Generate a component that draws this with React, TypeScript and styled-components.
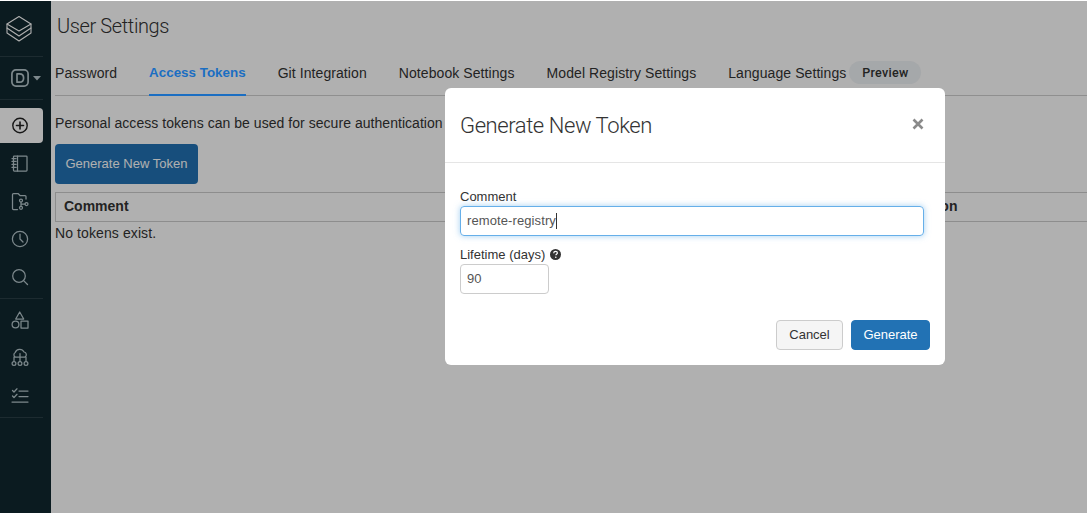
import React from "react";
import styled, { createGlobalStyle } from "styled-components";

const Global = createGlobalStyle`
  html, body { margin: 0; padding: 0; background: #fff; }
  body { font-family: "Liberation Sans", Arial, sans-serif; color: #333; font-size: 14px; }
  * { box-sizing: border-box; }
`;

const Page = styled.div`
  position: relative; width: 1087px; height: 513px; overflow: hidden;
  display: flex; padding-top: 1px; background: #fff;
`;
const Sidebar = styled.nav`
  width: 51px; flex: none; background: #11282f; display: flex; flex-direction: column;
  color: #b5c6cb; padding-right: 8px;
`;
const LogoSlot = styled.div`
  height: 55px; display: flex; align-items: center; padding: 0 0 0 6px; color: #fff;
`;
const Divider = styled.div`height: 1px; background: #2b3f46;`;
const WorkspaceSlot = styled.div`
  height: 42px; display: flex; align-items: center; gap: 4px; padding-left: 11px;
`;
const NavGroup = styled.div<{ $top: number }>`display: flex; flex-direction: column; padding: ${p => p.$top}px 0 2px;`;
const NavItem = styled.div<{ $active?: boolean }>`
  height: ${p => (p.$active ? 35 : 38)}px; margin-bottom: ${p => (p.$active ? 1 : 0)}px;
  display: flex; align-items: center; justify-content: center; padding: 0 4px 0 1px;
  border-radius: 0 4px 4px 0;
  background: ${p => (p.$active ? "#fff" : "transparent")};
  color: ${p => (p.$active ? "#222" : "inherit")};
`;
const Main = styled.main`flex: 1; min-width: 0; padding-left: 4px; display: flex; flex-direction: column;`;
const Title = styled.h1`
  margin: 0 0 0 2px; height: 51px; padding-top: 12px; font-family: Roboto, sans-serif; font-weight: 300;
  font-size: 20px; letter-spacing: -.38px; line-height: 26px; color: #333;
`;
const Tabs = styled.div`
  display: flex; gap: 32px; height: 44px; border-bottom: 1px solid #cfcfcf; white-space: nowrap; align-items: stretch;
`;
const Tab = styled.div<{ $active?: boolean }>`
  position: relative; z-index: ${p => (p.$active ? 1 : 0)};
  display: flex; align-items: center; height: 44px; padding-bottom: 1px;
  color: ${p => (p.$active ? "#1b6ec2" : "#333")};
  font-weight: ${p => (p.$active ? 700 : 400)};
  font-size: ${p => (p.$active ? 13.4 : 14)}px;
  letter-spacing: ${p => (p.$active ? 0 : .08)}px;
  border-bottom: 2px solid ${p => (p.$active ? "#1b6ec2" : "transparent")};
`;
const PreviewPill = styled.span`
  margin-left: 3px; width: 72px; height: 23px; border-radius: 12px; background: #f0f3f6;
  display: inline-flex; align-items: center; justify-content: center;
  font-family: Roboto, sans-serif; font-size: 12.5px; font-weight: 500; color: #333; letter-spacing: .3px;
`;
const Description = styled.p`margin: 19px 0 0; line-height: 16px; height: 16px; white-space: nowrap; letter-spacing: .04px;`;
const PrimaryLarge = styled.div`
  margin-top: 13px; width: 143px; height: 40px; padding-bottom: 2px; border-radius: 4px; background: #2272b4; color: #fff;
  display: flex; align-items: center; justify-content: center; font-size: 13px; letter-spacing: .02px;
`;
const TableHead = styled.div`
  margin-top: 8px; height: 30px; padding-bottom: 2px; border: 1px solid #ccc; border-right: 0; display: grid; grid-template-columns: 825px 1fr; align-items: center;
  padding-left: 8px; font-weight: 700;
`;
const EmptyText = styled.div`margin-top: 3px; line-height: 16px; letter-spacing: .1px;`;
const Backdrop = styled.div`
  position: absolute; left: 0; right: 0; top: 1px; bottom: 0; background: rgba(0,0,0,.31);
`;
const Modal = styled.div`
  position: absolute; z-index: 2; left: 445px; top: 88px; width: 500px; height: 277px; background: #fff; border-radius: 6px;
  display: flex; flex-direction: column;
`;
const ModalHeader = styled.header`
  height: 75px; border-bottom: 1px solid #e5e5e5; display: flex; align-items: center; justify-content: space-between;
  padding: 0 21px 0 15px;
`;
const ModalTitle = styled.h2`
  margin: 2px 0 0; font-family: Roboto, sans-serif; font-weight: 300; font-size: 22px; letter-spacing: -.42px; color: #333; line-height: 26px;
`;
const Close = styled.span`display: flex; color: #8a8a8a; margin-top: -2px;`;
const ModalBody = styled.div`padding: 26px 21px 0 15px; display: flex; flex-direction: column;`;
const Label = styled.label`
  font-size: 13px; line-height: 15px; color: #333; display: flex; align-items: center; gap: 5px;
`;
const Field = styled.div<{ $w?: number; $focus?: boolean }>`
  margin-top: 2px; height: 30px; width: ${p => (p.$w ? `${p.$w}px` : "100%")}; border-radius: 4px;
  border: 1px solid ${p => (p.$focus ? "#66afe9" : "#ccc")};
  box-shadow: ${p => (p.$focus ? "0 0 6px rgba(102,175,233,.6)" : "none")};
  padding: 0 0 2px 6px; font-size: 13px; letter-spacing: .1px; color: #555; display: flex; align-items: center;
`;
const Caret = styled.span`width: 1px; height: 16px; margin-top: 2px; background: #333; flex: none;`;
const FieldGroup = styled.div`margin-top: 11px;`;
const ModalFooter = styled.footer`
  margin-top: auto; display: flex; justify-content: flex-end; gap: 8px; padding: 0 15px 15px 0;
`;
const Button = styled.div<{ $primary?: boolean }>`
  height: 30px; padding-bottom: 2px; border-radius: 4px; display: flex; align-items: center; justify-content: center; font-size: 13px;
  width: ${p => (p.$primary ? 79 : 67)}px;
  background: ${p => (p.$primary ? "#2272b4" : "#f5f5f5")};
  color: ${p => (p.$primary ? "#fff" : "#333")};
  border: 1px solid ${p => (p.$primary ? "#2272b4" : "#ccc")};
`;

const Icon = ({ children, w = 20, h = 20 }: { children: React.ReactNode; w?: number; h?: number }) => (
  <svg width={w} height={h} viewBox={`0 0 ${w} ${h}`} fill="none" stroke="currentColor" strokeWidth={1.25} strokeLinecap="round" strokeLinejoin="round">
    {children}
  </svg>
);

export default function App() {
  return (
    <Page>
      <Global />
      <Sidebar>
        <LogoSlot>
          <Icon w={26} h={28}>
            <path d="M13 1.5 L25 9 L13 16 L1 9 Z" strokeWidth={1.1} />
            <path d="M1 9 V13 L13 21 L25 13 V9" strokeWidth={1.1} />
            <path d="M1 13 V18 L13 26 L25 18 V13" strokeWidth={1.1} />
          </Icon>
        </LogoSlot>
        <Divider />
        <WorkspaceSlot>
          <Icon w={18} h={18}>
            <rect x=".9" y=".9" width="16.2" height="16.2" rx="4" strokeWidth={1.7} />
            <path d="M6 4.8 V13.2 H8.6 C11.4 13.2 12.6 11.4 12.6 9 C12.6 6.6 11.4 4.8 8.6 4.8 Z" strokeWidth={1.7} />
          </Icon>
          <Icon w={8} h={6}>
            <path d="M0 1 H8 L4 5.5 Z" fill="currentColor" stroke="none" />
          </Icon>
        </WorkspaceSlot>
        <Divider />
        <NavGroup $top={8}>
          <NavItem $active>
            <Icon>
              <circle cx="10" cy="9.5" r="7.2" strokeWidth={1.4} />
              <path d="M10 6 V13 M6.5 9.5 H13.5" strokeWidth={1.6} />
            </Icon>
          </NavItem>
          <NavItem>
            <Icon>
              <rect x="3.5" y="3" width="13.5" height="15" rx=".8" />
              <path d="M7.5 3 V18 M2 5.5 H6 M2 8.4 H6 M2 11.4 H6 M2 14.4 H6" />
            </Icon>
          </NavItem>
          <NavItem>
            <Icon>
              <path d="M7.5 18.5 H3.5 A1 1 0 0 1 2.5 17.5 V3.5 A1 1 0 0 1 3.5 2.5 H8 L10 4.5 H15 A1 1 0 0 1 16 5.5 V8" />
              <circle cx="11" cy="9.5" r="1.5" />
              <circle cx="11" cy="16.8" r="1.5" />
              <circle cx="16.5" cy="13" r="1.5" />
              <path d="M11 11 V15.3 M11 13 H15" />
            </Icon>
          </NavItem>
          <NavItem>
            <Icon>
              <circle cx="10" cy="10" r="7.6" />
              <path d="M10 5 V10 L13 13" />
            </Icon>
          </NavItem>
          <NavItem>
            <Icon>
              <circle cx="9" cy="9" r="6.3" />
              <path d="M13.6 13.6 L17.5 17.5" />
            </Icon>
          </NavItem>
        </NavGroup>
        <Divider />
        <NavGroup $top={2}>
          <NavItem>
            <Icon>
              <path d="M9.7 2 L13.7 9 H5.7 Z" />
              <circle cx="5.5" cy="14.5" r="3.4" />
              <rect x="11" y="11" width="7" height="7" />
            </Icon>
          </NavItem>
          <NavItem>
            <Icon>
              <path d="M6 9 H5.2 A2.6 2.6 0 0 1 5.2 4.5 A4.8 4.8 0 0 1 14 4 A2.7 2.7 0 0 1 15 9 H4 V13 M10 5.5 V13.5 M16 9 V13" />
              <circle cx="4" cy="15.5" r="1.9" />
              <circle cx="10" cy="15.5" r="1.9" />
              <circle cx="16" cy="15.5" r="1.9" />
            </Icon>
          </NavItem>
          <NavItem>
            <Icon>
              <path d="M2.5 4.5 L4 6 L7 2.8 M2.5 10 L4 11.5 L7 8.3 M9 5 H18 M9 10.5 H18 M2 16 H18" />
            </Icon>
          </NavItem>
        </NavGroup>
        <Divider />
      </Sidebar>
      <Main>
        <Title>User Settings</Title>
        <Tabs>
          <Tab>Password</Tab>
          <Tab $active>Access Tokens</Tab>
          <Tab>Git Integration</Tab>
          <Tab>Notebook Settings</Tab>
          <Tab>Model Registry Settings</Tab>
          <Tab>Language Settings<PreviewPill>Preview</PreviewPill></Tab>
        </Tabs>
        <Description>Personal access tokens can be used for secure authentication</Description>
        <PrimaryLarge>Generate New Token</PrimaryLarge>
        <TableHead><span>Comment</span><span>Expiration</span></TableHead>
        <EmptyText>No tokens exist.</EmptyText>
      </Main>
      <Backdrop />
      <Modal>
        <ModalHeader>
          <ModalTitle>Generate New Token</ModalTitle>
          <Close>
            <svg width="12" height="12" viewBox="0 0 12 12" fill="none" stroke="currentColor" strokeWidth="2.6">
              <path d="M1.5 1.5 L10.5 10.5 M10.5 1.5 L1.5 10.5" />
            </svg>
          </Close>
        </ModalHeader>
        <ModalBody>
          <Label>Comment</Label>
          <Field $focus>remote-registry<Caret /></Field>
          <FieldGroup>
            <Label>
              Lifetime (days)
              <svg width="11" height="11" viewBox="0 0 11 11">
                <circle cx="5.5" cy="5.5" r="5.5" fill="#333" />
                <path d="M3.7 4.2 C3.7 3 4.6 2.4 5.6 2.4 C6.7 2.4 7.4 3.1 7.4 3.9 C7.4 5 5.9 5 5.9 6.3" fill="none" stroke="#fff" strokeWidth="1.2" />
                <circle cx="5.8" cy="8.2" r=".8" fill="#fff" />
              </svg>
            </Label>
            <Field $w={89}>90</Field>
          </FieldGroup>
        </ModalBody>
        <ModalFooter>
          <Button>Cancel</Button>
          <Button $primary>Generate</Button>
        </ModalFooter>
      </Modal>
    </Page>
  );
}
